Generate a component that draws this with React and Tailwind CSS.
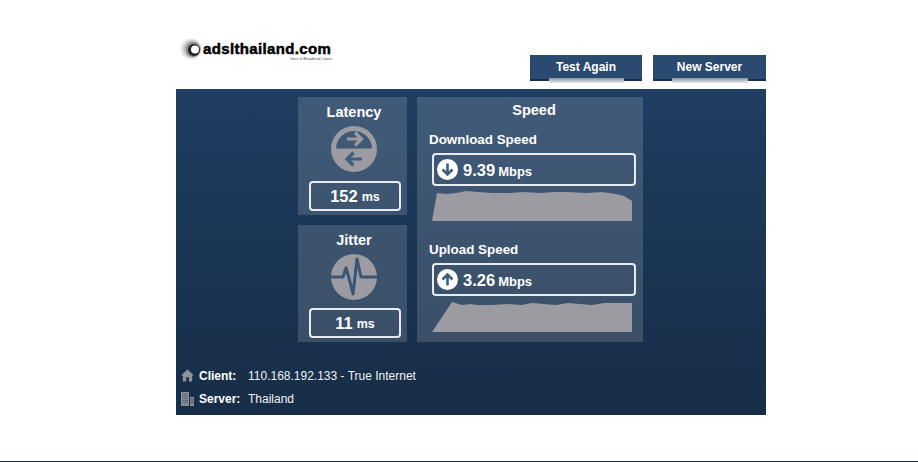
import React from "react";

const font = { fontFamily: '"Liberation Sans", Arial, sans-serif' };

function Logo() {
  return (
    <div className="relative w-[160px] h-[30px]">
      <svg width="24" height="24" viewBox="0 0 24 24" className="absolute left-[4px] top-[0px]">
        <circle cx="11" cy="12" r="10.5" fill="#e6e6e6" />
        <circle cx="12" cy="12" r="9" fill="#c4c4c4" />
        <circle cx="13" cy="12.5" r="7.5" fill="#8a8a8a" />
        <circle cx="14" cy="13" r="6" fill="#222222" />
        <circle cx="15" cy="12.5" r="4" fill="#ffffff" />
      </svg>
      <span className="absolute left-[27px] top-[5px] text-[15px] leading-[14px] font-bold text-black tracking-[0.35px] [-webkit-text-stroke:0.5px_#000]">
        adslthailand.com
      </span>
      <span className="absolute left-[114px] top-[21px] text-[3.5px] leading-[3px] text-gray-600 whitespace-nowrap">
        Voice of Broadband Citizen
      </span>
    </div>
  );
}

function TopButton({ label, width }) {
  return (
    <div className={`relative h-[26px] bg-[#2b4a70] border-b-2 border-[#1a3048] flex items-center justify-center text-white text-[12px] font-bold ${width}`}>
      <span>{label}</span>
      <div className="absolute left-[19px] right-[18px] -bottom-[4px] h-[5px] bg-gradient-to-b from-[#8b95a3] to-[#e8eaec]" />
    </div>
  );
}

function LatencyIcon() {
  return (
    <svg width="46" height="46" viewBox="0 0 46 46">
      <circle cx="23" cy="23" r="20.5" fill="none" stroke="#9b9ba1" strokeWidth="5" />
      <path d="M2 22.5a21 21 0 0 0 42 0z" fill="#9b9ba1" />
      <path d="M16 13h14M24 6.5l6.5 6.5-6.5 6.5" fill="none" stroke="#9b9ba1" strokeWidth="3.2" />
      <path d="M31 33H16M22.5 26.5L16 33l6.5 6.5" fill="none" stroke="#3f5d7d" strokeWidth="3.2" />
    </svg>
  );
}

function JitterIcon() {
  return (
    <svg width="46" height="46" viewBox="0 0 46 46">
      <circle cx="23" cy="23" r="23" fill="#9b9ba1" />
      <path d="M0 23h12l3-9 3 10 4 16 4-35 4 18h16" fill="none" stroke="#3a5674" strokeWidth="3" strokeLinejoin="round" />
    </svg>
  );
}

function PingCard({ title, icon, value, iconHeight, className }) {
  return (
    <div className={`w-[109px] bg-white/15 flex flex-col items-center pl-[3px] ${className}`}>
      <div className="text-white font-bold text-[14.5px] leading-[18px]">{title}</div>
      <div className={`mt-[5px] ${iconHeight}`}>{icon}</div>
      <div className="mt-[9px] ml-[2px] w-[92px] h-[30px] border-2 border-[#e8ecf0] rounded-[4px] flex items-center justify-center text-white font-bold text-[16.5px]">
        {value}
        <span className="text-[12.5px] ml-[4px] mt-[2px]">ms</span>
      </div>
    </div>
  );
}

function SpeedBlock({ label, value, dir, points, viewBox, className }) {
  return (
    <div className={className}>
      <div className="pl-[12px] text-white font-bold text-[13.4px] leading-[16px]">{label}</div>
      <div className="ml-[15px] mt-[5px] w-[204px] h-[33px] border-2 border-[#e8ecf0] rounded-[4px] flex items-center pl-[3px] text-white font-bold text-[16.5px]">
        <svg width="21" height="21" viewBox="0 0 21 21">
          <circle cx="10.5" cy="10.5" r="10.5" fill="#ffffff" />
          {dir === "down" ? (
            <path d="M10.5 4.5v11M5.5 10.5l5 5 5-5" fill="none" stroke="#3f5d7d" strokeWidth="2.6" />
          ) : (
            <path d="M10.5 16.5v-11M5.5 10.5l5-5 5 5" fill="none" stroke="#3f5d7d" strokeWidth="2.6" />
          )}
        </svg>
        <span className="ml-[5px] mt-[2px]">{value}</span>
        <span className="text-[13px] ml-[3px] mt-[4px]">Mbps</span>
      </div>
      <svg width="200" height="32" viewBox={viewBox} className="ml-[15px] mt-[5px] block">
        <polygon points={points} fill="#9b9ba1" />
      </svg>
    </div>
  );
}

function InfoRow({ icon, label, value }) {
  return (
    <div className="flex items-center h-[23px] text-white text-[12px]">
      <div className="w-[13px] h-[14px] flex items-center justify-center">{icon}</div>
      <span className="ml-[5px] w-[49px] font-bold">{label}</span>
      <span className="text-[#f0f2f4]">{value}</span>
    </div>
  );
}

export default function App() {
  const downPoints =
    "0,30 5,2 14,3 24,2 34,0 46,1 60,2 78,2 92,1 108,2 122,1 136,1 154,2 170,1 184,3 192,5 200,10 200,30";
  const upPoints =
    "0,30 20,0 30,3 38,2 46,3 60,3 76,2 90,3 100,1 112,2 124,3 136,1 148,2 160,3 172,1 186,1 200,1 200,30";

  return (
    <div className="w-[918px] h-[462px] bg-white flex flex-col" style={font}>
      <div className="ml-[176px] w-[590px] h-[89px] relative flex justify-end items-start pt-[55px] gap-[11px] shrink-0">
        <div className="absolute left-0 top-[37px]">
          <Logo />
        </div>
        <TopButton label="Test Again" width="w-[112px]" />
        <TopButton label="New Server" width="w-[113px]" />
      </div>

      <div className="ml-[176px] w-[590px] h-[326px] bg-gradient-to-b from-[#1f3e62] to-[#172d47] flex flex-col shrink-0">
        <div className="flex pt-[8px] pl-[122px] gap-[10px]">
          <div className="flex flex-col gap-[10px]">
            <PingCard title="Latency" icon={<LatencyIcon />} iconHeight="h-[46px]" value="152" className="h-[118px] pt-[6px]" />
            <PingCard title="Jitter" icon={<JitterIcon />} iconHeight="h-[45px]" value="11" className="h-[117px] pt-[6px]" />
          </div>
          <div className="w-[226px] h-[245px] bg-white/15">
            <div className="text-center text-white font-bold text-[14.5px] leading-[18px] pt-[4px] pl-[8px]">Speed</div>
            <SpeedBlock label="Download Speed" value="9.39" dir="down" points={downPoints} viewBox="0 0 200 32" className="mt-[13px]" />
            <SpeedBlock label="Upload Speed" value="3.26" dir="up" points={upPoints} viewBox="0 -1 200 32" className="mt-[19px]" />
          </div>
        </div>
        <div className="pl-[5px] pt-[22px]">
          <InfoRow
            label="Client:"
            value="110.168.192.133 - True Internet"
            icon={
              <svg width="14" height="13" viewBox="0 0 14 13">
                <path d="M7 0L0 6.5h2V13h3.5V8.5h3V13H12V6.5h2z" fill="#8f9299" />
              </svg>
            }
          />
          <InfoRow
            label="Server:"
            value="Thailand"
            icon={
              <svg width="13" height="14" viewBox="0 0 13 14">
                <path d="M0 0h8v14H0zM9 5h4v9H9z" fill="#8f9299" />
                <path d="M2 1.5v11M4 1.5v11M6 1.5v11M10.2 6.5v6M11.8 6.5v6" stroke="#1e3450" strokeWidth="0.9" strokeDasharray="1.2 0.9" />
              </svg>
            }
          />
        </div>
      </div>

      <div className="mt-auto h-px bg-[#1c2f45]" />
    </div>
  );
}
